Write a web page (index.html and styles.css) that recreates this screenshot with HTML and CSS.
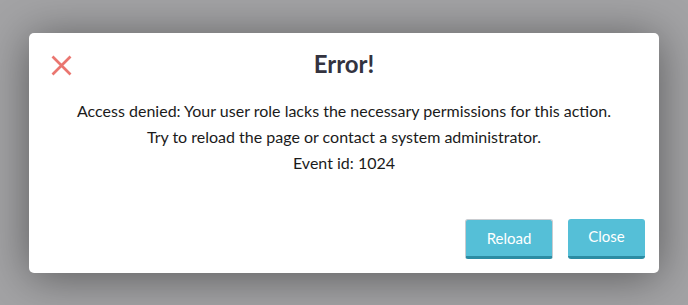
FILE: index.html
```html
<!DOCTYPE html>
<html lang="en">
<head>
<meta charset="utf-8">
<title>Error</title>
<link rel="stylesheet" href="styles.css">
</head>
<body>
<div class="backdrop">
  <div class="modal" role="dialog">
    <div class="modal-header">
      <svg class="icon-x" width="21" height="21" viewBox="0 0 21 21" aria-hidden="true">
        <path d="M1.5 1.5 L19.5 19.5 M19.5 1.5 L1.5 19.5" stroke="#ea7670" stroke-width="2.7" stroke-linecap="butt" fill="none"/>
      </svg>
      <h1 class="title">Error!</h1>
      <span></span>
    </div>
    <div class="modal-body">
      <p>Access denied: Your user role lacks the necessary permissions for this action.</p>
      <p>Try to reload the page or contact a system administrator.</p>
      <p>Event id: 1024</p>
    </div>
    <div class="modal-footer">
      <button class="btn btn-focus">Reload</button>
      <button class="btn">Close</button>
    </div>
  </div>
</div>
</body>
</html>
```
FILE: styles.css
```css
html, body {
  margin: 0;
  padding: 0;
  height: 100%;
}
body {
  background: #a3a3a5;
  font-family: Lato, "Open Sans", sans-serif;
}
.backdrop {
  height: 100%;
  display: flex;
  align-items: center;
  justify-content: center;
}
.modal {
  width: 630px;
  height: 240px;
  box-sizing: border-box;
  background: #fff;
  border-radius: 5px;
  box-shadow: 0 4px 45px rgba(0, 0, 0, 0.45);
  display: flex;
  flex-direction: column;
  padding: 19px 14px 14px 22px;
}
.modal-header {
  display: grid;
  grid-template-columns: 1fr auto 1fr;
  align-items: center;
  height: 24px;
}
.icon-x {
  display: block;
  margin-top: 3px;
}
.title {
  margin: 0;
  font-size: 24px;
  font-weight: 700;
  color: #33333f;
  line-height: 24px;
  padding-right: 8px;
}
.modal-body {
  margin-top: 22px;
  text-align: center;
  font-size: 16px;
  line-height: 26px;
  color: #1b1b1b;
  padding-right: 8px;
}
.modal-body p {
  margin: 0;
}
.modal-footer {
  margin-top: auto;
  display: flex;
  justify-content: flex-end;
  gap: 15px;
}
.btn {
  font-family: Lato, "Open Sans", sans-serif;
  font-size: 15px;
  color: #fff;
  background: #55bfd7;
  border: none;
  border-bottom: 3px solid #2b8ca3;
  border-radius: 3px;
  height: 40px;
  width: 77px;
  padding: 0 0 3px;
}
.btn-focus {
  width: 88px;
  border: 1px solid #c9ccd0;
  border-bottom: 3px solid #2b8ca3;
  padding: 1px 0 0;
}
```
